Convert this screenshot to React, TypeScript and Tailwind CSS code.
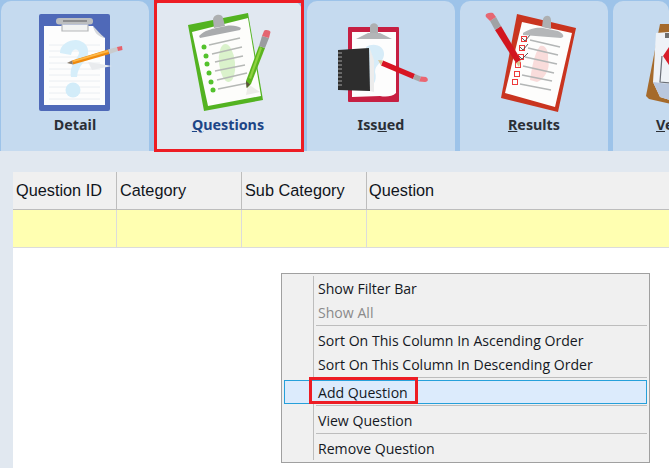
import React from "react";

const svgClass = "w-[148px] h-[112px] block blur-[0.4px]";

function DetailIcon() {
  return (
    <svg viewBox="1 1 148 112" className={svgClass}>
      <rect x="39" y="14" width="71" height="97" rx="2" fill="#4f69b8" />
      <path d="M44 26H93C96 32 100 36 105 38V105H44Z" fill="#fdfdfd" />
      <path d="M93 26C94 32 98 37 105 38C100 34 97 30 93 26Z" fill="#d5d8dd" />
      <g stroke="#eaeef2" strokeWidth="1">
        {[45, 51, 57, 63, 69, 75, 81, 87, 93, 99].map((y) => (
          <line key={y} x1="49" x2="100" y1={y} y2={y} />
        ))}
      </g>
      <path d="M60 53C60 44 69 40 76 40C85 41 89 47 88 54C86 62 78 65 77 77H71C69 64 78 59 79 53C79 48 72 48 71 55Z" fill="#d6eefa" />
      <circle cx="73" cy="90" r="7.5" fill="#d2ecf9" />
      <path d="M88 62L112 66L92 70Z" fill="#e9ebee" />
      <rect x="56" y="18" width="37" height="6.5" rx="3" fill="#bcbec0" />
      <line x1="63" x2="87" y1="21" y2="21" stroke="#77797b" strokeWidth="1.4" />
      <path d="M62 24.5V31H88V24.5" fill="#f2f3f3" stroke="#b5b7b9" strokeWidth="1.2" />
      <path d="M72 60.5L108 49.5L109.5 54L73 64.5Z" fill="#f08a0c" />
      <path d="M73 60.5L108 50L108.5 52L73.5 62Z" fill="#fdb94a" />
      <path d="M67 63L72 60.5L73 64.5Z" fill="#8a7d6d" />
      <path d="M108 49.5L117 47L118 51L109.5 54Z" fill="#c9cbcd" />
      <path d="M117 47L122 46L122.5 50L118 51Z" fill="#e8616b" />
    </svg>
  );
}

function QuestionsIcon() {
  const rows = [
    [204, 47, 209, 45, 240, 38],
    [206, 56, 212, 54, 242, 47],
    [207, 64, 215, 62, 243, 56],
    [209, 73, 215, 71, 245, 65],
    [211, 82, 217, 80, 247, 73],
    [213, 90, 218, 89, 248, 83],
  ];
  return (
    <svg viewBox="154 1 148 112" className={svgClass}>
      <path d="M188 25L248 13L263 100L204 111Z" fill="#53b321" />
      <path d="M192 32L248 18L261 96L208 106Z" fill="#fdfdfb" />
      <path d="M248 84L260 92L246 95Z" fill="#ecece8" />
      <ellipse cx="227" cy="63" rx="8" ry="19" fill="#daf2cb" transform="rotate(-6 227 63)" />
      {rows.map(([x, y, a, b, c, d]) => (
        <g key={y}>
          <circle cx={x} cy={y} r="2.5" fill="#53c22d" />
          <line x1={a} y1={b} x2={c} y2={d} stroke="#b5b8b5" strokeWidth="1.5" />
        </g>
      ))}
      <path d="M199 36C205 30 212 29 216 28L226 26C232 25 238 26 241 28L240 30L200 38Z" fill="#a9abad" />
      <path d="M214 28L213 20C213 14 222 13 223 18L225 26Z" fill="#adafb1" />
      <path d="M246 81L259 46L265 48L251 84L247 88Z" fill="#5bb41e" />
      <path d="M249 78L260 47L262 48L251 79Z" fill="#8ed23f" />
      <path d="M259 46L262 36L269 38L265 48Z" fill="#9a9c9e" />
      <path d="M262 36L264 31C265 29 270 30 270.500 32L269 38Z" fill="#e46571" />
      <path d="M246 81L250 84.500L246.500 88Z" fill="#5d513e" />
    </svg>
  );
}

function IssuedIcon() {
  return (
    <svg viewBox="307 1 148 112" className={svgClass}>
      <rect x="348" y="27" width="51" height="75" rx="1" fill="#c61f42" />
      <path d="M352 32H396V93C392 97 385 97 380 96L352 97Z" fill="#fdfdfd" />
      <path d="M366 47C374 42 385 46 384 55C383 63 375 64 375 72C377 78 375 85 370 86L365 80Z" fill="#d7ecf8" />
      <path d="M356 39L368 33H380L392 39Z" fill="#b3b5b7" />
      <path d="M370 33V27C370 22 378 22 378 27V33Z" fill="#adafb1" />
      <path d="M338 50L369 48L370 91L338 90Z" fill="#2d2d2d" />
      <path d="M370 49L374 60V92L370 91Z" fill="#ececec" />
      <g stroke="#a4a4a4" strokeWidth="1">
        {[53, 57, 61, 65, 69, 73, 77, 81, 85].map((y) => (
          <line key={y} x1="338" x2="342" y1={y} y2={y} />
        ))}
      </g>
      <path d="M383 60.500L415 74L413 79L381 65.500Z" fill="#d81523" />
      <path d="M378 60L383 60.500L381 65.500Z" fill="#d8c89a" />
      <path d="M415 74L421 76.500L419 81.500L413 79Z" fill="#a7a7a7" />
      <path d="M421 76.500L426 77C429 79 428 82 425 82L419 81.500Z" fill="#ea6672" />
    </svg>
  );
}

function ResultsIcon() {
  const rows = [
    [524, 39, 530, 40, 560, 47],
    [522, 48, 528, 48, 558, 55],
    [521, 57, 525, 57, 557, 64],
    [518, 65, 523, 66, 554, 73],
    [517, 74, 522, 75, 552, 81],
    [515, 82, 520, 84, 551, 90],
  ];
  return (
    <svg viewBox="460 1 148 112" className={svgClass}>
      <path d="M517 14L576 28L558 112L501 98Z" fill="#c9341f" />
      <path d="M522 22L572 33L555 107L505 93Z" fill="#fdfdfc" />
      <path d="M540 46C546 44 549 52 548 60C551 68 544 80 537 82L530 80C532 68 534 54 540 46Z" fill="#f9dcdb" />
      {rows.map(([x, y, a, b, c, d]) => (
        <g key={y}>
          <rect x={x - 2.5} y={y - 2.5} width="5" height="5" fill="none" stroke="#ee3a3a" strokeWidth="1" />
          <line x1={a} y1={b} x2={c} y2={d} stroke="#b3b6b6" strokeWidth="1.6" />
        </g>
      ))}
      <g stroke="#4a4a4a" strokeWidth="0.9" fill="none">
        <path d="M522 38L525 41L530 35" />
        <path d="M520 47L523 50L528 44" />
        <path d="M519 56L522 59L528 53" />
      </g>
      <path d="M523 33C530 28 538 27 543 28L558 31C562 33 564 35 563 37L561 38L523 35Z" fill="#b4b6b8" />
      <path d="M542 27L543 19C545 14 551 15 551 20L551 29Z" fill="#adafb1" />
      <path d="M495 30L501 26L521 60L516 63Z" fill="#d2151f" />
      <path d="M516 63L521 60L519 67Z" fill="#d9c28c" />
      <path d="M490 21L496 17L501 26L495 30Z" fill="#a0a2a4" />
      <path d="M486 17C484 13 490 12 493 13L496 17L490 21Z" fill="#e66672" />
    </svg>
  );
}

function VerifyIcon() {
  return (
    <svg viewBox="613 1 56 112" className="w-[56px] h-[112px] block blur-[0.4px]">
      <path d="M660 24L680 24L680 106L649 99L646 96Z" fill="#a56a2b" />
      <path d="M656 33L670 32L670 100L660 97L653 82Z" fill="#eef2f7" />
      <path d="M653 82L660 97L670 100V84Z" fill="#b9c7de" />
      <path d="M662 56L660 82L670 83" fill="none" stroke="#6b6f78" strokeWidth="1.2" />
      <path d="M663 56L669 47V65Z" fill="#d81e2a" />
      <path d="M665 33H670V38H665Z" fill="#6f6f6f" />
    </svg>
  );
}

function Tab({
  label,
  icon,
  active,
  grow,
}: {
  label: React.ReactNode;
  icon: React.ReactNode;
  active?: boolean;
  grow?: boolean;
}) {
  return (
    <div
      className={`relative shrink-0 h-[150px] rounded-t-[10px] ${grow ? "w-[56px]" : "w-[148px]"} ${
        active ? "bg-[#e1e8f1]" : "bg-[#c5daef]"
      }`}
    >
      {icon}
      <div
        className={`pt-[3px] text-[14.3px] leading-[18px] font-bold whitespace-nowrap ${grow ? "pl-[43px]" : "text-center"} ${
          active ? "text-[#1c4587]" : "text-[#2b2f36]"
        }`}
      >
        {label}
      </div>
      {active && <div className="absolute left-0 top-[-1px] w-[150px] h-[152px] border-[3px] border-[#ed1c24]" />}
    </div>
  );
}

function Sep() {
  return (
    <div className="h-[4px] pt-[1px]">
      <div className="ml-[32px] h-px bg-[#bdbdbd]" />
    </div>
  );
}

function Item({ children, muted }: { children: React.ReactNode; muted?: boolean }) {
  return (
    <div className={`pl-[34px] h-[24px] leading-[26px] whitespace-nowrap ${muted ? "text-[#8a8a8a]" : "text-[#14181f]"}`}>
      {children}
    </div>
  );
}

const headers = [
  { label: "Question ID", w: "w-[104px]" },
  { label: "Category", w: "w-[125px]" },
  { label: "Sub Category", w: "w-[125px]" },
];

export default function App() {
  return (
    <div className="relative w-[669px] h-[468px] overflow-hidden bg-[#e1e8f0]" style={{ fontFamily: '"Noto Sans", sans-serif' }}>
      <div className="flex gap-[5px] h-[151px] pt-px pl-px bg-[#9dc3e9] border-b border-[#9dc3e9]">
        <Tab label="Detail" icon={<DetailIcon />} />
        <Tab label={<><u>Q</u>uestions</>} icon={<QuestionsIcon />} active />
        <Tab label={<>Iss<u>u</u>ed</>} icon={<IssuedIcon />} />
        <Tab label={<><u>R</u>esults</>} icon={<ResultsIcon />} />
        <Tab label={<><u>V</u>e</>} icon={<VerifyIcon />} grow />
      </div>

      <div className="ml-[13px] mt-[21px] h-[296px] bg-white" style={{ fontFamily: '"Liberation Sans", sans-serif' }}>
        <div className="flex h-[38px] bg-[#f0f0f0] border-b border-[#bdbdbd]">
          {headers.map((h) => (
            <div key={h.label} className={`${h.w} shrink-0 border-r border-[#bdbdbd] pl-[3px] text-[16.3px] leading-[37px] text-[#10151c]`}>
              {h.label}
            </div>
          ))}
          <div className="flex-1 pl-[2px] text-[16.3px] leading-[37px] text-[#10151c]">Question</div>
        </div>
        <div className="flex h-[38px] bg-[#ffffb1] border-b border-[#dcdcdc]">
          {headers.map((h) => (
            <div key={h.label} className={`${h.w} shrink-0 border-r border-[#dcdcdc]`} />
          ))}
        </div>
      </div>

      <div
        className="absolute left-[281px] top-[273px] w-[369px] h-[190px] bg-[#f0f0f0] border border-[#a0a0a0] p-[2px] text-[14.1px]"
        style={{ fontFamily: '"Open Sans", sans-serif' }}
      >
        <div className="absolute left-[31px] top-[2px] bottom-[2px] w-px bg-[#bdbdbd]" />
        <Item>Show Filter Bar</Item>
        <Item muted>Show All</Item>
        <Sep />
        <Item>Sort On This Column In Ascending Order</Item>
        <Item>Sort On This Column In Descending Order</Item>
        <Sep />
        <div className="relative h-[24px] leading-[24px] pl-[33px] bg-[#dcebfc] border border-[#26a0da] text-[#14181f]">
          Add Question
          <div className="absolute left-[24px] top-[-4px] w-[109px] h-[27px] border-[3px] border-[#ed1c24]" />
        </div>
        <Sep />
        <Item>View Question</Item>
        <Sep />
        <Item>Remove Question</Item>
      </div>
    </div>
  );
}
